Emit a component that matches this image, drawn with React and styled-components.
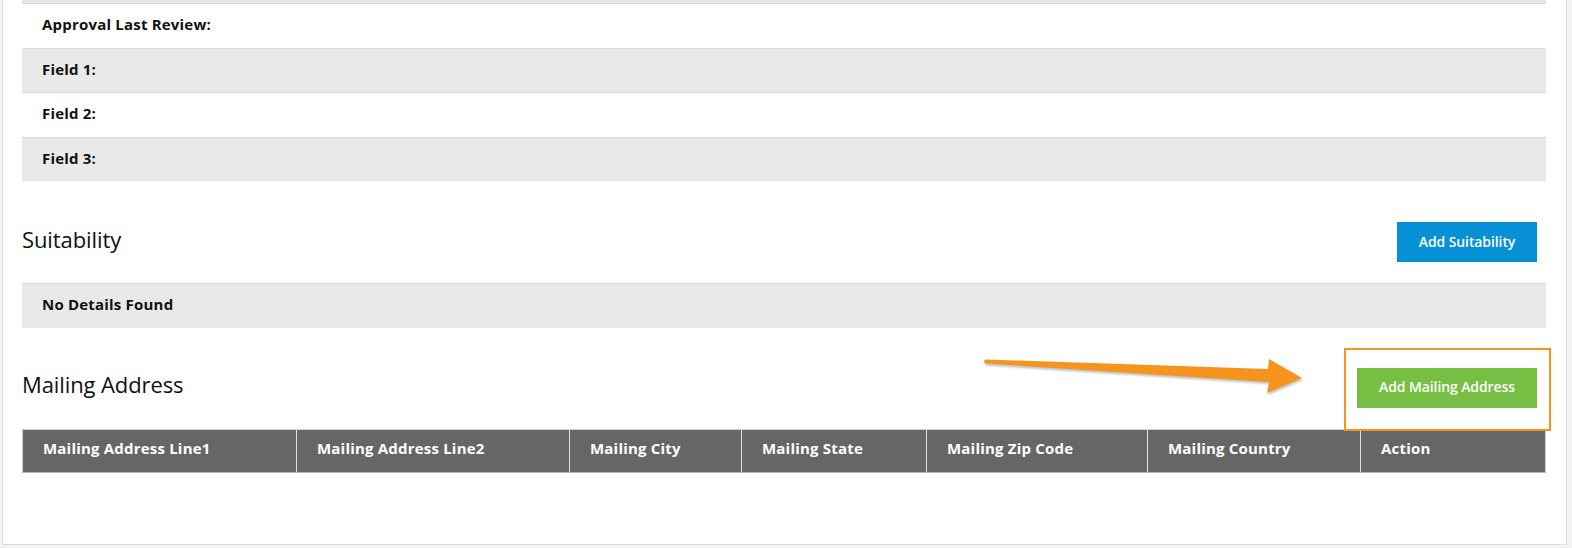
import React from 'react';
import styled, { createGlobalStyle } from 'styled-components';

const GlobalStyle = createGlobalStyle`
    html, body {
        margin: 0;
        padding: 0;
        background: #f4f4f4;
    }
    body {
        font-family: "Open Sans", "Liberation Sans", sans-serif;
        color: #111;
    }
`;

const Panel = styled.div`
    width: 1565px;
    height: 545px;
    box-sizing: border-box;
    margin-left: 2px;
    background: #fff;
    border: 1px solid #dcdcdc;
    border-top: none;
    padding: 0 20px 0 19px;
`;

const StubRow = styled.div`
    height: 3px;
    background: #e9e9e9;
`;

const InfoRow = styled.div`
    display: flex;
    align-items: center;
    height: 44.5px;
    box-sizing: border-box;
    border-top: 1px solid #dadada;
    padding: 0 0 3px 20px;
    background: ${p => (p.$shade ? '#e9e9e9' : '#fff')};
    font-size: 15px;
    font-weight: 700;
    letter-spacing: 0.2px;
`;

const SectionHead = styled.div`
    position: relative;
    display: flex;
    align-items: center;
    justify-content: space-between;
    padding: ${p => p.$top}px 9px 21px 0;
`;

const Title = styled.h2`
    margin: 0 0 7px;
    font-size: 22px;
    font-weight: 400;
    letter-spacing: -0.1px;
    color: #111;
`;

const Button = styled.button`
    height: 40px;
    width: ${p => p.$w}px;
    border: none;
    padding: 0 0 2px;
    color: #fff;
    background: ${p => p.$bg};
    font-family: inherit;
    font-size: 14px;
    font-weight: 600;
    letter-spacing: -0.1px;
    cursor: pointer;
`;

const Highlight = styled.div`
    position: relative;

    &::after {
        content: '';
        position: absolute;
        left: -13px;
        right: -14px;
        top: -20px;
        bottom: -23px;
        border: 2px solid #f7941e;
        pointer-events: none;
    }
`;

const Arrow = styled.svg`
    position: absolute;
    left: 950px;
    top: 20px;
    overflow: visible;
    filter: drop-shadow(1px 2px 1px rgba(0, 0, 0, 0.25));
`;

const Table = styled.div`
    display: grid;
    grid-template-columns: 273px 273px 172px 185px 221px 213px 185px;
    background: #666;
    border: 1px solid #cfcfcf;
    border-bottom-color: #b5b5b5;
`;

const HeadCell = styled.div`
    height: 42px;
    box-sizing: border-box;
    display: flex;
    align-items: center;
    padding: 0 0 5px 20px;
    color: #fff;
    font-size: 15px;
    font-weight: 700;
    letter-spacing: 0.2px;
    border-left: ${p => (p.$first ? 'none' : '1px solid #e2e2e2')};
`;

const columns = [
    'Mailing Address Line1',
    'Mailing Address Line2',
    'Mailing City',
    'Mailing State',
    'Mailing Zip Code',
    'Mailing Country',
    'Action',
];

const fields = ['Approval Last Review:', 'Field 1:', 'Field 2:', 'Field 3:'];

export default function App() {
    return (
        <>
            <GlobalStyle />
            <Panel>
                <StubRow />
                {fields.map((f, i) => (
                    <InfoRow key={f} $shade={i % 2 === 1}>{f}</InfoRow>
                ))}

                <SectionHead $top={41}>
                    <Title>Suitability</Title>
                    <Button $bg="#0690d6" $w={140}>Add Suitability</Button>
                </SectionHead>
                <InfoRow $shade>No Details Found</InfoRow>

                <SectionHead $top={40}>
                    <Title>Mailing Address</Title>
                    <Arrow width="320" height="40" viewBox="0 0 320 40">
                        <path
                            d="M14 11.5 C11.5 11.5 11.5 15.5 14 15.5 L297 34 L295 45 L330 30 L297 11 L296 21 Z"
                            fill="#f7941e"
                        />
                    </Arrow>
                    <Highlight>
                        <Button $bg="#77bf43" $w={180}>Add Mailing Address</Button>
                    </Highlight>
                </SectionHead>

                <Table>
                    {columns.map((c, i) => (
                        <HeadCell key={c} $first={i === 0}>{c}</HeadCell>
                    ))}
                </Table>
            </Panel>
        </>
    );
}
